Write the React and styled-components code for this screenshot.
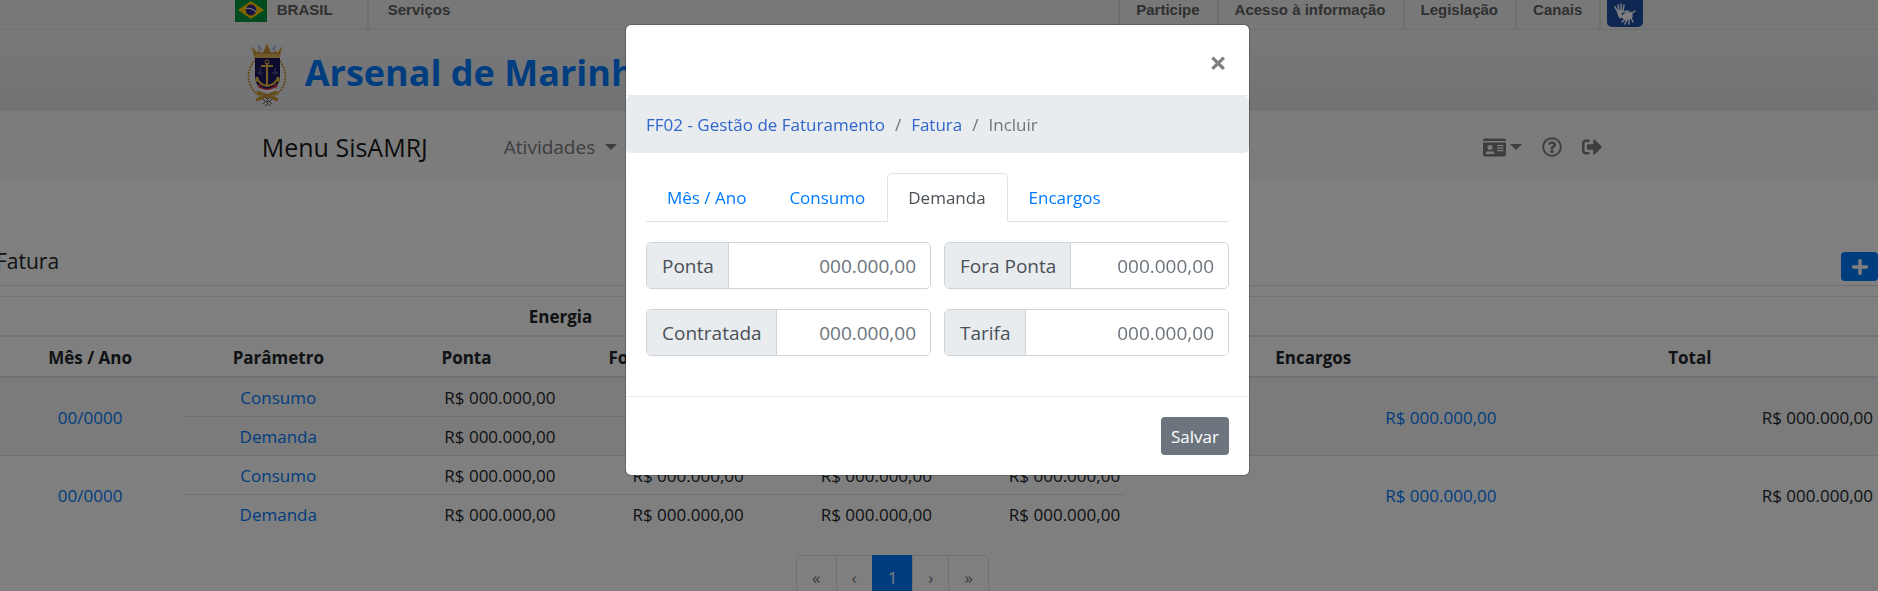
import React, { useState } from "react";
import styled, { createGlobalStyle, css } from "styled-components";
import {
  FaIdCard,
  FaRegQuestionCircle,
  FaSignOutAlt,
  FaPlus,
} from "react-icons/fa";

const GlobalStyle = createGlobalStyle`
  *, *::before, *::after { box-sizing: border-box; }
  body {
    margin: 0;
    height: 100vh;
    overflow: hidden;
    background: #fff;
    color: #212529;
    font: 17px/27px "Segoe UI", "Open Sans", "Noto Sans", sans-serif;
  }
  a { color: #007bff; text-decoration: none; }
  button, input { font: inherit; }
`;

/* ---------- government bar ---------- */

const Container = styled.div`
  display: flex;
  width: 75%;
  margin: 0 auto;
`;

const GovBar = styled.div`
  height: 30px;
  background: #f1f1f1;
  border-bottom: 1px solid #dfdfdf;
  font: bold 15px/20px "Liberation Sans", Arial, sans-serif;
`;

const GovHome = styled.a`
  display: flex;
  gap: 10px;
  width: 134px;
  height: 29px;
  color: #606060;
  border-right: 2px solid #dcdcdc;
`;

const GovLink = styled.a`
  height: 29px;
  padding: 0 17px 0 16px;
  color: #606060;
  border-right: 2px solid #dcdcdc;
  ${(p) => p.$plain && css`
    padding-left: 19px;
    border-right: 0;
  `}
`;

const GovLinks = styled.nav`
  display: flex;
  margin-left: auto;
  border-left: 2px solid #dcdcdc;
`;

const Libras = styled.button`
  display: grid;
  place-items: center;
  width: 36px;
  height: 27px;
  margin-left: 6px;
  padding: 0;
  border: 0;
  border-radius: 0 0 5px 5px;
  background: #1c4ea4;
`;

/* ---------- header ---------- */

const Header = styled.header`
  padding: 13px 0 5px;
  background: linear-gradient(#eff4f2, #ebecef 40%, #e6e6ea);
`;

const Title = styled.h1`
  margin: 0;
  padding: 0 0 0 18px;
  color: #007bff;
  font-size: 36px;
  line-height: 60px;
  white-space: nowrap;
`;

const Crest = styled.svg`
  width: 40px;
  height: 63px;
  margin-left: 12px;
`;

/* ---------- navigation ---------- */

const NavBar = styled.div`
  background: #f8f9fa;
`;

const NavInner = styled(Container)`
  align-items: center;
  height: 70px;
  padding: 2px 41px 0 27px;
`;

const Brand = styled.a`
  margin-right: 76px;
  color: #191919;
  font-size: 25px;
`;

const NavButton = styled.button`
  display: flex;
  align-items: center;
  gap: ${(p) => p.$gap || 0}px;
  padding: 0;
  border: 0;
  background: none;
  color: #7c7c7d;
  font-size: 19px;
`;

const Caret = styled.span`
  border: 6px solid transparent;
  border-top-color: currentColor;
  border-bottom: 0;
`;

const NavIcons = styled.div`
  display: flex;
  align-items: center;
  gap: 20px;
  margin-left: auto;
`;

/* ---------- page content ---------- */

const Content = styled.main`
  margin-left: -4px;
  padding-top: 62px;
`;

const TitleRow = styled.div`
  display: flex;
  align-items: flex-start;
  justify-content: space-between;
  height: 43px;
  margin-bottom: 10px;
  border-bottom: 1px solid #dfdfdf;
`;

const PageTitle = styled.h2`
  margin: 3px 0 0;
  font-size: 21px;
  font-weight: 400;
  line-height: 30px;
`;

const AddButton = styled.button`
  display: grid;
  place-items: center;
  width: 37px;
  height: 29px;
  margin-top: 9px;
  padding: 0;
  border: 0;
  border-radius: 4px;
  background: #007bff;
  color: #fff;
`;

const Table = styled.table`
  width: 100%;
  table-layout: fixed;
  border-collapse: separate;
  border-spacing: 0;
`;

const Th = styled.th`
  padding: 6px 5px 5px;
  border-top: 1px solid #dee2e6;
  border-bottom: 2px solid #dee2e6;
  ${(p) => p.$second && css`
    padding-top: 7px;
    border-top: 0;
  `}
`;

const Td = styled.td`
  padding: 6px 5px 5px;
  text-align: ${(p) => p.$align || "right"};
  border-top: ${(p) => (p.$first ? 0 : "1px solid #dee2e6")};
  background: ${(p) => (p.$striped ? "#f7f7f7" : "transparent")};
`;

const Pagination = styled.nav`
  display: flex;
  justify-content: center;
  margin-top: 22px;
  padding-right: 88px;
`;

const PageLink = styled.a`
  padding: 8px 15px 10px;
  margin-left: -1px;
  border: 1px solid #dee2e6;
  color: #6c757d;
  &:first-child { border-radius: 5px 0 0 5px; }
  &:last-child { border-radius: 0 5px 5px 0; }
  ${(p) => p.$active && css`
    background: #007bff;
    border-color: #007bff;
    color: #fff;
  `}
`;

/* ---------- modal ---------- */

const Backdrop = styled.div`
  position: fixed;
  inset: 0;
  display: flex;
  align-items: flex-start;
  justify-content: center;
  padding-top: 24px;
  background: rgba(0, 0, 0, 0.5);
`;

const Dialog = styled.div`
  width: 625px;
  max-width: 100%;
  margin-right: 3px;
  border: 1px solid rgba(0, 0, 0, 0.2);
  border-radius: 6px;
  background: #fff;
  background-clip: padding-box;
`;

const DialogHeader = styled.div`
  display: flex;
  justify-content: flex-end;
  padding: 22px 20px 18px;
  border-bottom: 1px solid #e9ecef;
`;

const Close = styled.button`
  width: 22px;
  height: 30px;
  padding: 0;
  border: 0;
  background: none;
  color: #7f7f7f;
  font-size: 31px;
  font-weight: 700;
  line-height: 30px;
`;

const Breadcrumb = styled.nav`
  display: flex;
  gap: 10px;
  padding: 15px 20px;
  border-radius: 5px;
  background: #e9ecef;
  color: #6c757d;
  a { color: #2f66cc; }
`;

const DialogBody = styled.form`
  padding: 20px 20px 40px;
`;

const Tabs = styled.div`
  display: flex;
  border-bottom: 1px solid #dee2e6;
`;

const Tab = styled.button`
  margin-bottom: -1px;
  padding: 10px 21px 10px 20px;
  border: 1px solid transparent;
  border-radius: 5px 5px 0 0;
  background: none;
  color: #007bff;
  ${(p) => p.$active && css`
    border-color: #dee2e6 #dee2e6 #fff;
    background: #fff;
    color: #495057;
  `}
`;

const Fields = styled.div`
  display: grid;
  grid-template-columns: 1fr 1fr;
  gap: 20px 13px;
  margin-top: 20px;
`;

const Field = styled.div`
  display: flex;
  height: 47px;
  border: 1px solid #ced4da;
  border-radius: 5px;
  overflow: hidden;
  font-size: 19px;
`;

const FieldLabel = styled.label`
  display: flex;
  align-items: center;
  padding: 1px 14px 0 15px;
  border-right: 1px solid #ced4da;
  background: #e9ecef;
  color: #495057;
  white-space: nowrap;
`;

const FieldInput = styled.input`
  flex: 1;
  width: 0;
  min-width: 0;
  padding: 1px 14px 0;
  border: 0;
  text-align: right;
  &::placeholder { color: #6c757d; opacity: 1; }
`;

const DialogFooter = styled.div`
  display: flex;
  justify-content: flex-end;
  padding: 20px;
  border-top: 1px solid #e9ecef;
`;

const SaveButton = styled.button`
  height: 38px;
  padding: 0 10px;
  border: 0;
  border-radius: 4px;
  background: #6c757d;
  color: #fff;
`;

const Flag = () => (
  <svg width="32" height="22" viewBox="0 0 32 22" aria-hidden="true">
    <rect width="32" height="22" fill="#009440" />
    <path d="M16 1 29 10 16 19 3 10Z" fill="#ffcb00" />
    <circle cx="16" cy="10" r="5.4" fill="#302681" />
    <path d="M11 8.4Q17 7.4 21 12" fill="none" stroke="#fff" strokeWidth="1.1" />
  </svg>
);

const Hands = () => (
  <svg width="22" height="24" viewBox="0 0 22 24" fill="none" stroke="#fff" strokeLinecap="round" aria-hidden="true">
    <path d="M4 10 1 5M5 9 4 3M7 8 7 2M9 9 10 3" strokeWidth="1.5" />
    <path d="M4 9Q6 8 9 9L7 12 9 15 6 16Q3 13 4 9Z" fill="#fff" />
    <path d="M9 13Q14 8 18 11L18 16 15 17 11 18 9 16Z" fill="#fff" />
    <path d="M14 9 9 10M18 11 21 9M11 17 8 20M13 17 11 22M15 17V22M17 16 19 20" strokeWidth="1.5" />
  </svg>
);

const ArsenalCrest = () => (
  <Crest viewBox="0 0 40 63" fill="none" role="img" aria-label="Brasão">
    <path d="M7 18C-2 30 0 47 15 54M33 18C42 30 40 47 25 54" stroke="#c89a3c" strokeWidth="2" strokeDasharray="2 1" />
    <path d="m5 4 5 6 2-4 4 4 4-9 4 9 4-4 2 4 5-6-3 12H8Z" fill="#c98c38" stroke="#e4b964" />
    <path d="m11 2 4 7M29 2l-4 7" stroke="#dfe3f0" strokeWidth="4" />
    <path d="m12 3 2 4M28 3l-2 4" stroke="#6a7fb8" />
    <path d="M8 11h24v4H8Z" fill="#e5b45a" />
    <path d="M8 15h25v19q0 8-8 11l-5 3-5-3q-7-3-7-11Z" fill="#19145a" />
    <path d="M11 42q9 10 19 0" stroke="#d63349" strokeWidth="2.5" />
    <path d="M13 46q7 4 15 0" stroke="#fff" strokeWidth="2" />
    <path d="M20 20v23M14 23h12M10 34q2 8 10 9 9-1 11-9M10 34l-1 5M31 34l1 5" stroke="#eab84e" strokeWidth="2.2" />
    <circle cx="20" cy="19" r="2" stroke="#eab84e" />
    <path d="M11 29q2 4 5 0M25 29q3 4 6 0M13 25v6M28 25v6" stroke="#7777a8" />
    <path d="m9 57 21-8M31 57 10 49" stroke="#cb9736" strokeWidth="3" />
    <path d="m17 55 7 7m0-7-7 7" stroke="#4a4450" strokeWidth="3.5" />
    <path d="m17 55 7 7m0-7-7 7" stroke="#f3eddc" strokeWidth="2" />
    <circle cx="20.5" cy="58.5" r="1" fill="#272129" />
  </Crest>
);

const AMOUNT = "R$ 000.000,00";
const COLUMNS = ["Mês / Ano", "Parâmetro", "Ponta", "Fora Ponta", "Ponta", "Fora Ponta", "Encargos", "Total"];
const INVOICES = [
  { id: 1, period: "00/0000", striped: true },
  { id: 2, period: "00/0000", striped: false },
];
const TABS = ["Mês / Ano", "Consumo", "Demanda", "Encargos"];
const FIELDS = ["Ponta", "Fora Ponta", "Contratada", "Tarifa"];

function InvoiceRows({ invoice, first }) {
  const s = invoice.striped;
  return (
    <>
      <tr>
        <Td rowSpan={2} $align="center" $first={first} $striped={s}><a href="#periodo">{invoice.period}</a></Td>
        <Td $align="center" $first={first} $striped={s}><a href="#consumo">Consumo</a></Td>
        {[0, 1, 2, 3].map((i) => <Td key={i} $first={first} $striped={s}>{AMOUNT}</Td>)}
        <Td rowSpan={2} colSpan={2} $first={first} $striped={s}><a href="#encargos">{AMOUNT}</a></Td>
        <Td rowSpan={2} colSpan={2} $first={first} $striped={s}>{AMOUNT}</Td>
      </tr>
      <tr>
        <Td $align="center" $striped={s}><a href="#demanda">Demanda</a></Td>
        {[0, 1, 2, 3].map((i) => <Td key={i} $striped={s}>{AMOUNT}</Td>)}
      </tr>
    </>
  );
}

export default function App() {
  const [tab, setTab] = useState("Demanda");
  return (
    <>
      <GlobalStyle />
      <GovBar>
        <Container>
          <GovHome href="#brasil"><Flag />BRASIL</GovHome>
          <GovLink href="#servicos" $plain>Serviços</GovLink>
          <GovLinks>
            <GovLink href="#participe">Participe</GovLink>
            <GovLink href="#acesso">Acesso à informação</GovLink>
            <GovLink href="#legislacao">Legislação</GovLink>
            <GovLink href="#canais">Canais</GovLink>
          </GovLinks>
          <Libras type="button" aria-label="Libras"><Hands /></Libras>
        </Container>
      </GovBar>
      <Header>
        <Container>
          <ArsenalCrest />
          <Title>Arsenal de Marinha</Title>
        </Container>
      </Header>
      <NavBar>
        <NavInner>
          <Brand href="#menu">Menu SisAMRJ</Brand>
          <NavButton type="button" $gap={10}>Atividades<Caret /></NavButton>
          <NavIcons>
            <NavButton type="button" $gap={4} aria-label="Perfil"><FaIdCard size={23} /><Caret /></NavButton>
            <NavButton type="button" aria-label="Ajuda"><FaRegQuestionCircle size={20} /></NavButton>
            <NavButton type="button" aria-label="Sair"><FaSignOutAlt size={20} /></NavButton>
          </NavIcons>
        </NavInner>
      </NavBar>
      <Content>
        <TitleRow>
          <PageTitle>Fatura</PageTitle>
          <AddButton type="button" aria-label="Incluir fatura"><FaPlus size={18} /></AddButton>
        </TitleRow>
        <Table>
          <thead>
            <tr>
              <Th colSpan={6}>Energia</Th>
              <Th colSpan={4} />
            </tr>
            <tr>
              {COLUMNS.map((name, i) => (
                <Th key={i} $second colSpan={i > 5 ? 2 : 1}>{name}</Th>
              ))}
            </tr>
          </thead>
          <tbody>
            {INVOICES.map((invoice, i) => (
              <InvoiceRows key={invoice.id} invoice={invoice} first={i === 0} />
            ))}
          </tbody>
        </Table>
        <Pagination aria-label="Páginas">
          <PageLink href="#primeira">«</PageLink>
          <PageLink href="#anterior">‹</PageLink>
          <PageLink href="#1" $active>1</PageLink>
          <PageLink href="#proxima">›</PageLink>
          <PageLink href="#ultima">»</PageLink>
        </Pagination>
      </Content>
      <Backdrop>
        <Dialog role="dialog" aria-modal="true" aria-label="Incluir fatura">
          <DialogHeader>
            <Close type="button" aria-label="Fechar">×</Close>
          </DialogHeader>
          <Breadcrumb>
            <a href="#ff02">FF02 - Gestão de Faturamento</a>
            <span>/</span>
            <a href="#fatura">Fatura</a>
            <span>/</span>
            <span>Incluir</span>
          </Breadcrumb>
          <DialogBody id="fatura-form">
            <Tabs role="tablist">
              {TABS.map((name) => (
                <Tab key={name} type="button" role="tab" aria-selected={tab === name} $active={tab === name} onClick={() => setTab(name)}>
                  {name}
                </Tab>
              ))}
            </Tabs>
            <Fields>
              {FIELDS.map((name, i) => (
                <Field key={name}>
                  <FieldLabel htmlFor={`campo-${i}`}>{name}</FieldLabel>
                  <FieldInput id={`campo-${i}`} placeholder="000.000,00" />
                </Field>
              ))}
            </Fields>
          </DialogBody>
          <DialogFooter>
            <SaveButton type="submit" form="fatura-form">Salvar</SaveButton>
          </DialogFooter>
        </Dialog>
      </Backdrop>
    </>
  );
}
